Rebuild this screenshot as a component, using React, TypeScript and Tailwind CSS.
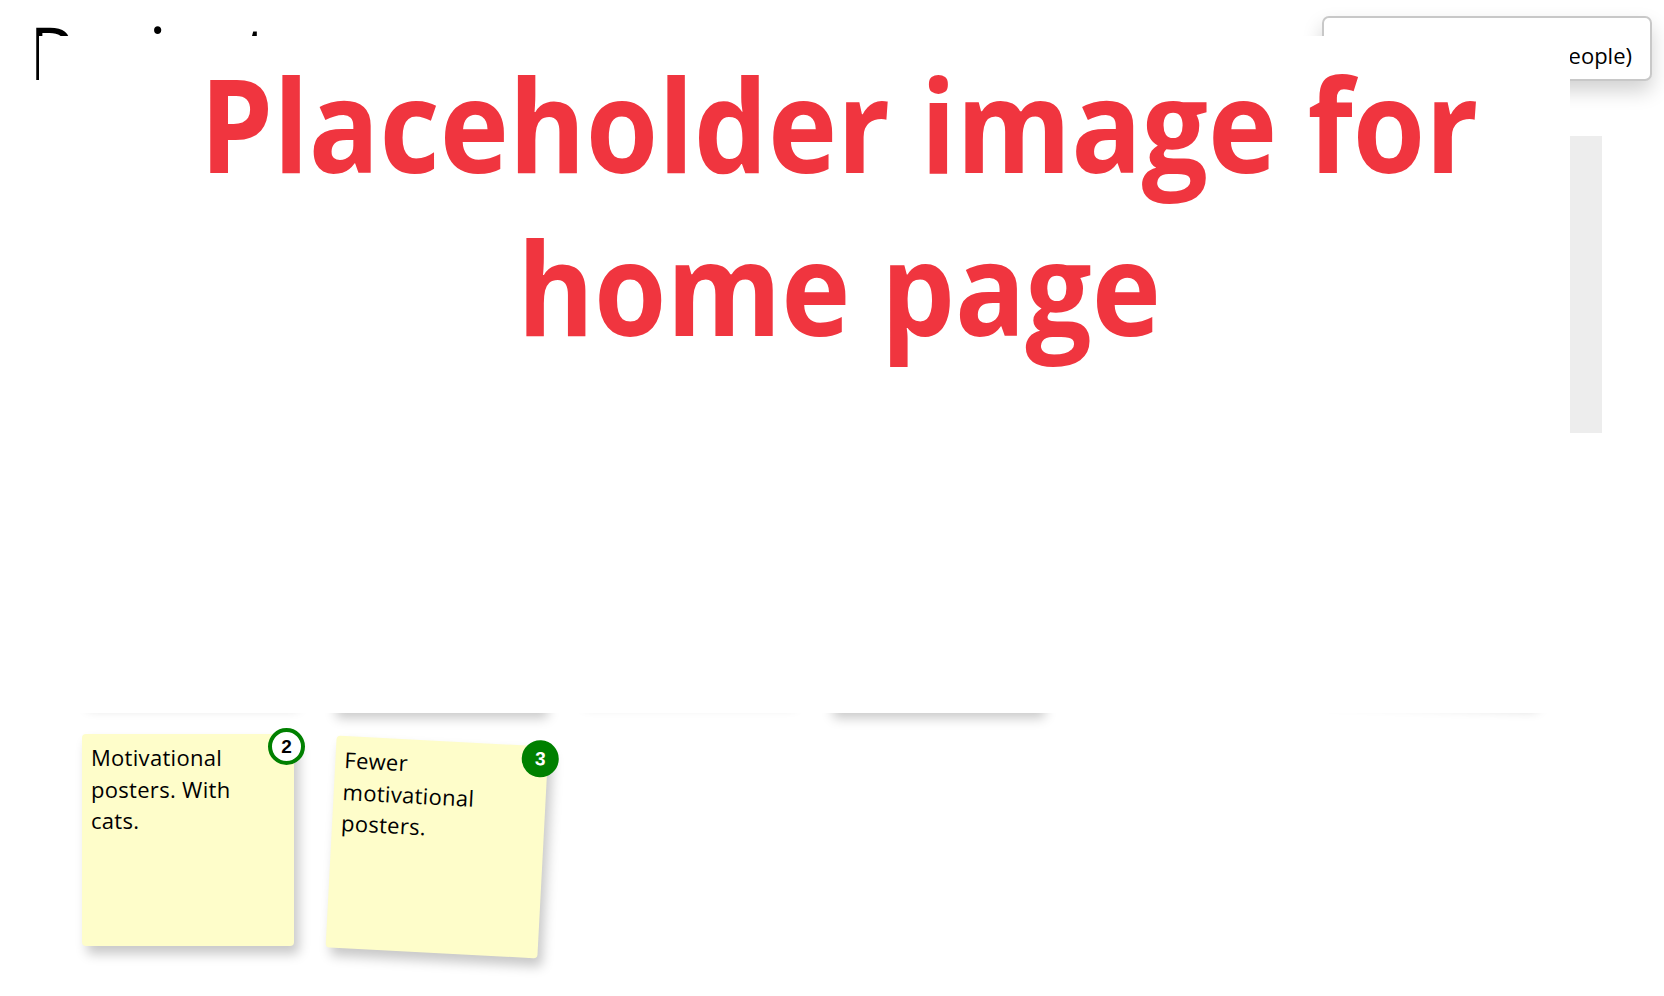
import React from "react";

type Note = {
  text: string;
  votes: number;
  voted?: boolean;
  tilt?: string;
};

// first row sits under the placeholder, only its shadows peek out
const hiddenRow: Note[] = [
  { text: "Standing desks.", votes: 1, tilt: "-translate-y-[10px]" },
  { text: "A proper coffee machine.", votes: 4, tilt: "translate-y-0" },
  { text: "Quiet room for calls.", votes: 2, tilt: "-translate-y-[12px]" },
  { text: "Plants. Lots of plants.", votes: 5, tilt: "translate-y-0" },
  { text: "Fix the wifi upstairs.", votes: 1, tilt: "-translate-y-[40px]" },
  { text: "Bigger whiteboards.", votes: 2, tilt: "-translate-y-[12px] rotate-2" },
];

const shownRow: Note[] = [
  { text: "Motivational posters. With cats.", votes: 2, tilt: "" },
  { text: "Fewer motivational posters.", votes: 3, voted: true, tilt: "translate-y-[7px] rotate-3" },
];

function Badge({ votes, voted }: { votes: number; voted?: boolean }) {
  return (
    <span
      className={
        "absolute -top-[6px] -right-[11px] flex h-[37px] w-[37px] items-center justify-center rounded-full border-[4px] border-[#008000] font-['Liberation_Sans',sans-serif] text-[19px] font-bold leading-none " +
        (voted ? "bg-[#008000] text-white" : "bg-white text-black")
      }
    >
      {votes}
    </span>
  );
}

function StickyNote({ note }: { note: Note }) {
  return (
    <div
      className={
        "relative h-[212px] w-[212px] shrink-0 rounded-[4px] bg-[#fefdca] pl-[9px] pr-[40px] pt-[8px] shadow-[5px_8px_12px_rgba(0,0,0,0.22)] " +
        note.tilt
      }
    >
      <p className="font-['Comic_Sans_MS','Open_Sans',sans-serif] text-[22px] leading-[31.5px] tracking-[0.3px] text-black">
        {note.text}
      </p>
      <Badge votes={note.votes} voted={note.voted} />
    </div>
  );
}

export default function App() {
  return (
    <div className="relative h-[996px] w-full overflow-hidden bg-white font-['Open_Sans',sans-serif] text-black">
      <header className="flex items-start justify-between pl-[29px] pr-[12px] pt-[16px]">
        <h1 className="-mt-px text-[74px] font-normal leading-none">Projects</h1>
        <div className="flex h-[65px] w-[330px] items-center justify-end rounded-[7px] border-2 border-[#c8c8c8] bg-white pr-[18px] pt-[12px] text-[22px] leading-[30px] shadow-[0_10px_20px_rgba(0,0,0,0.18)]">
          Sorted by votes (people)
        </div>
      </header>

      <div className="flex">
        <main className="flex flex-1 flex-wrap gap-x-[36.5px] gap-y-[24px] pl-[82px] pt-[409px]">
          {hiddenRow.map((n) => (
            <StickyNote key={n.text} note={n} />
          ))}
          {shownRow.map((n) => (
            <StickyNote key={n.text} note={n} />
          ))}
        </main>
        <aside className="mr-[62px] mt-[47px] h-[297px] w-[32px] shrink-0 bg-[#ededed]" />
      </div>

      {/* placeholder image lying over the page */}
      <div className="absolute left-[39px] top-[36px] z-10 h-[677px] w-[1531px] bg-white pl-[69px] pt-[5px] text-center">
        <p className="scale-x-[0.9] whitespace-nowrap font-['Open_Sans',sans-serif] text-[130px] font-bold leading-[163px] text-[#f0353f]">
          Placeholder image for
          <br />
          home page
        </p>
      </div>
    </div>
  );
}
